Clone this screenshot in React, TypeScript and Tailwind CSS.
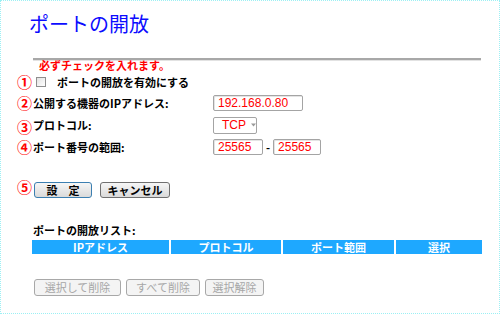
const jp = "font-['Noto_Sans_CJK_JP',sans-serif]";
const num = "font-['Liberation_Sans',Arial,sans-serif]";

function Circled({ n, className = '' }: { n: string; className?: string }) {
  return (
    <span className={`w-[16px] shrink-0 text-[15px] font-bold leading-[16px] text-[#ff0000] ${className}`}>{n}</span>
  );
}

function TextBox({ value, w }: { value: string; w: string }) {
  return (
    <div
      className={`${w} ${num} h-[16px] rounded-[2px] border border-[#a4a4a4] bg-white pl-[4px] text-[12px] leading-[14px] text-[#ff0000] shadow-[inset_1px_1px_0_#e4e4e4]`}
    >
      {value}
    </div>
  );
}

function GrayButton({ label, w, focus }: { label: string; w: string; focus?: boolean }) {
  return (
    <button
      className={`${w} h-[16px] rounded-[3px] border ${
        focus ? 'border-[#3c7fb1]' : 'border-[#707070]'
      } bg-gradient-to-b from-[#f6f6f6] to-[#dadada] text-[11px] leading-[14px] font-bold text-black`}
    >
      {label}
    </button>
  );
}

function DisabledButton({ label, w }: { label: string; w: string }) {
  return (
    <button
      className={`${w} h-[17px] rounded-[3px] border border-[#a8a8a8] bg-[#f4f4f4] text-[11px] leading-[15px] text-[#a6a6a6]`}
    >
      {label}
    </button>
  );
}

export default function App() {
  return (
    <div className={`${jp} h-[314px] w-[500px] overflow-hidden border border-dotted border-[#9cf0f4] bg-white text-[11px] text-black`}>
      <h1 className="ml-[28px] mt-[11px] text-[20px] leading-[24px] text-[#0c0cff]">ポートの開放</h1>

      <div className="ml-[32px] mt-[22px] h-[3px] w-[448px] border-t-2 border-b border-t-[#a8a8a8] border-b-[#e2e2e2]" />

      <p className="-mt-[2px] ml-[38px] font-bold leading-[13px] text-[#ff0000]">必ずチェックを入れます。</p>

      <div className="flex h-[20px] items-center pl-[16px]">
        <Circled n="①" />
        <div className="ml-[3px] h-[10px] w-[10px] border border-[#8e8e8e] bg-gradient-to-br from-[#e2e2e2] to-white" />
        <span className="ml-[11px] font-bold">ポートの開放を有効にする</span>
      </div>

      <div className="flex h-[22px] items-center pl-[16px]">
        <Circled n="②" />
        <span className="w-[180px] font-bold">公開する機器のIPアドレス:</span>
        <TextBox value="192.168.0.80" w="w-[90px]" />
      </div>

      <div className="flex h-[22px] items-center pl-[16px]">
        <Circled n="③" className="translate-y-[2px]" />
        <span className="w-[180px] font-bold">プロトコル:</span>
        <div
          className={`${num} flex h-[17px] w-[44px] items-center rounded-[2px] border border-[#a4a4a4] bg-white pl-[8px] text-[12px] text-[#ff0000]`}
        >
          <span>TCP</span>
          <svg className="ml-[5px]" width="7" height="4" viewBox="0 0 7 4">
            <path d="M0 0h7L3.5 4z" fill="#9a9a9a" />
          </svg>
        </div>
      </div>

      <div className="flex h-[22px] items-center pl-[16px]">
        <Circled n="④" />
        <span className="w-[180px] font-bold">ポート番号の範囲:</span>
        <TextBox value="25565" w="w-[50px]" />
        <span className="mx-[3px] font-bold">-</span>
        <TextBox value="25565" w="w-[48px]" />
      </div>

      <div className="mt-[23px] flex h-[18px] items-center pl-[16px]">
        <Circled n="⑤" className="-translate-y-[3px]" />
        <div className="ml-[1px] flex gap-[8px]">
          <GrayButton label="設　定" w="w-[58px]" focus />
          <GrayButton label="キャンセル" w="w-[70px]" />
        </div>
      </div>

      <p className="ml-[32px] mt-[25px] font-bold leading-[13px]">ポートの開放リスト:</p>

      <div className="ml-[31px] mt-[3px] flex h-[14px] gap-[2px] text-[11px] font-bold leading-[14px] text-white">
        <div className="w-[137px] bg-[#1ea8ff] text-center">IPアドレス</div>
        <div className="w-[110px] bg-[#1ea8ff] text-center">プロトコル</div>
        <div className="w-[111px] bg-[#1ea8ff] text-center">ポート範囲</div>
        <div className="w-[86px] bg-[#1ea8ff] text-center">選択</div>
      </div>

      <div className="ml-[33px] mt-[25px] flex gap-[5px]">
        <DisabledButton label="選択して削除" w="w-[87px]" />
        <DisabledButton label="すべて削除" w="w-[74px]" />
        <DisabledButton label="選択解除" w="w-[59px]" />
      </div>
    </div>
  );
}
